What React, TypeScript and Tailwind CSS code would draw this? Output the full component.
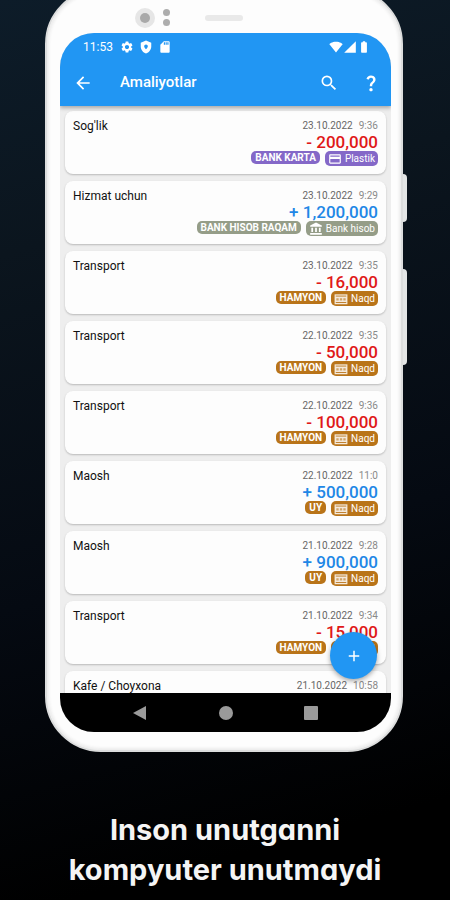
import type { ComponentType } from "react";
import {
  MdAccountBalance,
  MdAdd,
  MdArrowBack,
  MdBatteryFull,
  MdCreditCard,
  MdQuestionMark,
  MdSdCard,
  MdSearch,
  MdSettings,
  MdSignalCellular4Bar,
  MdSignalWifi4Bar,
} from "react-icons/md";

type Kind = "card" | "bank" | "cash";

type Operation = {
  title: string;
  date: string;
  time: string;
  amount?: string;
  account?: string;
  kind: Kind;
};

const KINDS: Record<
  Kind,
  { label: string; bg: string; Icon: ComponentType<{ className?: string }> }
> = {
  card: { label: "Plastik", bg: "bg-[#8468c8]", Icon: MdCreditCard },
  bank: { label: "Bank hisob", bg: "bg-[#959d88]", Icon: MdAccountBalance },
  cash: { label: "Naqd", bg: "bg-[#b97419]", Icon: BanknoteIcon },
};

const OPERATIONS: Operation[] = [
  { title: "Sog'lik", date: "23.10.2022", time: "9:36", amount: "- 200,000", account: "BANK KARTA", kind: "card" },
  { title: "Hizmat uchun", date: "23.10.2022", time: "9:29", amount: "+ 1,200,000", account: "BANK HISOB RAQAM", kind: "bank" },
  { title: "Transport", date: "23.10.2022", time: "9:35", amount: "- 16,000", account: "HAMYON", kind: "cash" },
  { title: "Transport", date: "22.10.2022", time: "9:35", amount: "- 50,000", account: "HAMYON", kind: "cash" },
  { title: "Transport", date: "22.10.2022", time: "9:36", amount: "- 100,000", account: "HAMYON", kind: "cash" },
  { title: "Maosh", date: "22.10.2022", time: "11:0", amount: "+ 500,000", account: "UY", kind: "cash" },
  { title: "Maosh", date: "21.10.2022", time: "9:28", amount: "+ 900,000", account: "UY", kind: "cash" },
  { title: "Transport", date: "21.10.2022", time: "9:34", amount: "- 15,000", account: "HAMYON", kind: "cash" },
  { title: "Kafe / Choyxona", date: "21.10.2022", time: "10:58", kind: "cash" },
];

function BanknoteIcon({ className }: { className?: string }) {
  return (
    <svg viewBox="0 0 24 24" className={className} aria-hidden="true">
      <path d="M1 4h22v17H1Z" fill="currentColor" opacity="0.85" />
      <path d="M3 7h18M3 18h18" stroke="#b97419" strokeWidth="1.5" />
      <path d="M4 12.500h4M10 12.500h4M16 12.500h4" stroke="#b97419" strokeWidth="4" opacity="0.6" />
    </svg>
  );
}

function ShieldIcon() {
  return (
    <svg viewBox="0 0 24 24" className="size-3.5" fill="currentColor" aria-hidden="true">
      <path
        fillRule="evenodd"
        d="M12 1 3 4.500V11c0 5.500 3.800 10.300 9 12 5.200-1.700 9-6.500 9-12V4.500L12 1Zm0 6.500a3.200 3.200 0 0 1 3.200 3.200c0 2.200-3.200 5.200-3.200 5.200s-3.200-3-3.200-5.200A3.200 3.200 0 0 1 12 7.500Z"
      />
    </svg>
  );
}

function StatusBar() {
  return (
    <div className="flex h-7 items-center justify-between pr-5 pl-[23px] text-xs">
      <div className="flex items-center gap-[5px]">
        <span className="mr-0.5">11:53</span>
        <MdSettings className="size-3.5" />
        <ShieldIcon />
        <MdSdCard className="size-3.5" />
      </div>
      <div className="flex items-center">
        <MdSignalWifi4Bar className="size-3.5" />
        <MdSignalCellular4Bar className="size-3.5" />
        <MdBatteryFull className="size-3.5" />
      </div>
    </div>
  );
}

function AppBar() {
  return (
    <header className="relative z-10 bg-[#2196f3] text-white shadow-[0_2px_4px_rgba(0,0,0,0.3)]">
      <StatusBar />
      <div className="flex h-[45px] items-center pr-2.5 pb-0.5 pl-[13px]">
        <button aria-label="Orqaga">
          <MdArrowBack className="size-5" />
        </button>
        <h1 className="ml-[27px] flex-1 text-[15px] font-medium">Amaliyotlar</h1>
        <div className="flex items-center gap-[22px]">
          <button aria-label="Qidirish">
            <MdSearch className="size-5" />
          </button>
          <button aria-label="Yordam">
            <MdQuestionMark className="size-5" />
          </button>
        </div>
      </div>
    </header>
  );
}

function OperationCard({ op }: { op: Operation }) {
  const { label, bg, Icon } = KINDS[op.kind];
  const income = op.amount?.startsWith("+");

  return (
    <li className="flex h-[63px] shrink-0 justify-between rounded-lg bg-[#fdfdfd] px-2 pt-2 shadow-[0_1px_2px_rgba(0,0,0,0.22)]">
      <p className="text-xs leading-[14px] text-[#111]">{op.title}</p>
      <div className="flex flex-col items-end">
        <p className="flex gap-1.5 text-[10px] leading-[14px] text-[#8a8a8a]">
          <span className="text-[#666]">{op.date}</span>
          <span>{op.time}</span>
        </p>
        {op.amount && (
          <p
            className={[
              "text-[17px] leading-[18px] font-medium",
              income ? "text-[#1f87e6]" : "text-[#e01818]",
            ].join(" ")}
          >
            {op.amount}
          </p>
        )}
        {op.account && (
          <div className="flex items-start gap-[5px] text-[10px] text-white">
            <span className={`rounded-[5px] px-1 leading-[13px] font-bold ${bg}`}>
              {op.account}
            </span>
            <span className={`flex items-center gap-[3px] rounded-[5px] px-[3px] leading-[15px] ${bg}`}>
              <Icon className="size-3.5" />
              {label}
            </span>
          </div>
        )}
      </div>
    </li>
  );
}

function NavBar() {
  return (
    <nav className="grid h-[39px] grid-cols-[1fr_14px_1fr] items-center bg-black text-[#9a9a9a]">
      <button aria-label="Orqaga" className="mr-[72px] justify-self-end">
        <svg viewBox="0 0 14 14" className="size-3.5" fill="currentColor">
          <path d="M13 0v14L0 7Z" />
        </svg>
      </button>
      <button aria-label="Bosh ekran" className="size-3.5 rounded-full bg-current" />
      <button aria-label="Oynalar" className="ml-[71px] size-3.5 rounded-[1px] bg-current" />
    </nav>
  );
}

function Phone() {
  return (
    <div className="relative -mt-3 mr-[47px] ml-[45px]">
      {/* side keys */}
      <div className="absolute top-[186px] -right-1 h-12 w-2 rounded-sm bg-[#e4e6e6]" />
      <div className="absolute top-[281px] -right-1 h-24 w-2 rounded-sm bg-[#e4e6e6]" />

      <div className="relative rounded-[56px] border-2 border-[#dcdddd] bg-[#fdfdfd] pr-2.5 pb-[18px] pl-[13px] shadow-[inset_0_0_3px_2px_#ececec]">
        <div className="flex h-[43px] items-center pt-3">
          <div className="ml-[75px] flex size-5 items-center justify-center rounded-full bg-[#e6e6e6]">
            <div className="size-2.5 rounded-full bg-[#a9a9a9]" />
          </div>
          <div className="ml-2 flex flex-col gap-[3px]">
            <div className="size-[7px] rounded-full bg-[#adadad]" />
            <div className="size-[7px] rounded-full bg-[#adadad]" />
          </div>
          <div className="ml-[35px] h-1.5 w-[38px] rounded-full bg-[#e9e9e9]" />
        </div>

        <div className="relative overflow-hidden rounded-[34px] bg-[#eeeeee]">
          <AppBar />
          <ul className="flex h-[587px] flex-col gap-[7px] overflow-hidden px-[5px] pt-[5px]">
            {OPERATIONS.map((op, i) => (
              <OperationCard key={i} op={op} />
            ))}
          </ul>
          <button
            aria-label="Qo'shish"
            className="absolute right-3.5 bottom-[53px] flex size-[47px] items-center justify-center rounded-full bg-[#2196f3] text-white shadow-[0_2px_5px_rgba(0,0,0,0.35)]"
          >
            <MdAdd className="size-[18px]" />
          </button>
          <NavBar />
        </div>
      </div>
    </div>
  );
}

export default function App() {
  return (
    <main className="min-h-screen overflow-hidden bg-black bg-[linear-gradient(165deg,#0d1c29_0%,#0b151e_25%,#050a12_60%,#000_90%)] font-[Roboto,sans-serif]">
      <Phone />
      <p className="mt-[58px] text-center font-[Inter,sans-serif] text-[29px] leading-10 font-bold text-[#f5f5f5] [font-feature-settings:'cv11']">
        Inson unutganni
        <br />
        kompyuter unutmaydi
      </p>
    </main>
  );
}
